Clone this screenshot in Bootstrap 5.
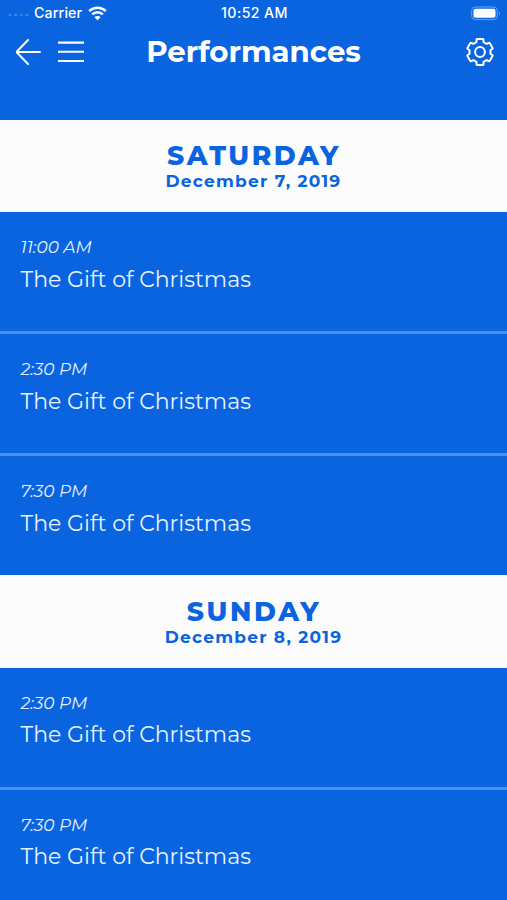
<!DOCTYPE html>
<html lang="en">
<head>
<meta charset="utf-8">
<meta name="viewport" content="width=device-width, initial-scale=1">
<title>Performances</title>
<link href="https://cdn.jsdelivr.net/npm/bootstrap@5.3.0/dist/css/bootstrap.min.css" rel="stylesheet">
<style>
  body { background: #0a64df; color: #fff; font-family: Montserrat, Inter, sans-serif; overflow: hidden; }
  .app-head { height: 119.5px; }
  .status-bar { height: 26px; font: 500 14.2px/26px Inter, sans-serif; }
  .status-bar .side { flex: 1 1 0; }
  .carrier { letter-spacing: .15px; margin: 0 6px 0 5px; }
  .clock { letter-spacing: .4px; padding-right: 2px; }
  .title-bar { height: 52px; }
  .title-bar .side { flex: 1 1 0; }
  .page-title { font-size: 29.2px; font-weight: 700; line-height: 52px; padding-left: 8px; }
  .day-head { height: 92.5px; background: #fcfcfc; color: #0a64df; padding-top: 21.5px; }
  .day-name { font-size: 26.5px; font-weight: 800; line-height: 30px; letter-spacing: 2.6px; margin-right: -1px; }
  .day-date { font-size: 17px; font-weight: 700; line-height: 20px; letter-spacing: 1.25px; margin-right: 0; }
  .show-list { --bs-list-group-bg: transparent; --bs-list-group-color: #fff; }
  .show-list .list-group-item { height: 122px; border: 0; border-bottom: 3px solid #4c90ea; padding: 24px 20.5px 0; color: #e6f2ff; }
  .show-list .list-group-item:last-child { height: 119px; border-bottom: 0; }
  .show-time { font-size: 17px; font-style: italic; line-height: 23px; }
  .show-name { font-size: 22px; line-height: 30px; margin-top: 5.5px; }
</style>
</head>
<body>
<header class="app-head">
  <div class="status-bar d-flex align-items-center">
    <div class="side d-flex align-items-center ps-2">
      <svg width="21" height="5" viewBox="0 0 21 5" fill="#3f86ea"><circle cx="2" cy="4" r="1.5"/><circle cx="7.7" cy="4" r="1.5"/><circle cx="13.3" cy="4" r="1.5"/><circle cx="19" cy="4" r="1.5"/></svg>
      <span class="carrier">Carrier</span>
      <svg width="19" height="15" viewBox="0 0 19 15" fill="none" stroke="#fff" stroke-width="2.5"><path d="M1.2 5.2a11.8 11.8 0 0 1 16.6 0M4.2 8.4a7.6 7.6 0 0 1 10.6 0"/><path d="M9.5 14.3 6.4 11.2a4.4 4.4 0 0 1 6.2 0z" fill="#fff" stroke="none"/></svg>
    </div>
    <div class="clock">10:52 AM</div>
    <div class="side d-flex justify-content-end pe-1">
      <svg width="32" height="15" viewBox="0 0 32 15"><rect x=".7" y="1" width="25.6" height="12.6" rx="3.6" fill="none" stroke="#69a4f2"/><rect x="2.5" y="2.8" width="22" height="9" rx="2" fill="#fff"/><path d="M28 5.2q2 2.1 0 4.2z" fill="#69a4f2"/></svg>
    </div>
  </div>
  <div class="title-bar d-flex align-items-center">
    <div class="side d-flex align-items-center">
      <svg class="ms-3" width="26" height="28" viewBox="0 0 26 28" fill="none" stroke="#fff" stroke-width="2" stroke-linecap="round" stroke-linejoin="round"><path d="M12 2 .4 14 12 26M.4 14H24"/></svg>
      <svg class="ms-3" width="26" height="22" viewBox="0 0 26 22" stroke="#fff" stroke-width="2.1"><path d="M0 1.6h26M0 10.8h26M0 20h26"/></svg>
    </div>
    <h1 class="page-title m-0">Performances</h1>
    <div class="side d-flex justify-content-end pe-2">
      <svg class="me-1" width="30" height="30" viewBox="0 0 30 30" fill="none" stroke="#fff" stroke-width="2" stroke-linejoin="round"><path d="M12 2.100H18Q18.500 2.200 18.500 3V5.100L21.700 6.900 23.700 5.800Q24.400 5.500 24.800 6.200L27.600 11Q27.900 11.600 27.300 12L25.500 13.200V16.800L27.300 18Q27.900 18.400 27.600 19L24.800 23.800Q24.400 24.500 23.700 24.200L21.700 23.100 18.500 24.900V27Q18.500 27.800 18 27.900H12Q11.500 27.800 11.500 27V24.900L8.300 23.100 6.300 24.200Q5.600 24.500 5.200 23.800L2.400 19Q2.100 18.400 2.700 18L4.500 16.800V13.200L2.700 12Q2.100 11.600 2.400 11L5.200 6.200Q5.600 5.500 6.300 5.800L8.300 6.900 11.500 5.100V3Q11.500 2.200 12 2.100Z"/><circle cx="15" cy="15" r="4.900"/></svg>
    </div>
  </div>
</header>
<main>
  <section>
    <div class="day-head text-center">
      <h2 class="day-name mb-0">SATURDAY</h2>
      <div class="day-date">December 7, 2019</div>
    </div>
    <ul class="show-list list-group list-group-flush">
      <li class="list-group-item"><div class="show-time">11:00 AM</div><div class="show-name">The Gift of Christmas</div></li>
      <li class="list-group-item"><div class="show-time">2:30 PM</div><div class="show-name">The Gift of Christmas</div></li>
      <li class="list-group-item"><div class="show-time">7:30 PM</div><div class="show-name">The Gift of Christmas</div></li>
    </ul>
  </section>
  <section>
    <div class="day-head text-center">
      <h2 class="day-name mb-0">SUNDAY</h2>
      <div class="day-date">December 8, 2019</div>
    </div>
    <ul class="show-list list-group list-group-flush">
      <li class="list-group-item"><div class="show-time">2:30 PM</div><div class="show-name">The Gift of Christmas</div></li>
      <li class="list-group-item"><div class="show-time">7:30 PM</div><div class="show-name">The Gift of Christmas</div></li>
    </ul>
  </section>
</main>
<script src="https://cdn.jsdelivr.net/npm/bootstrap@5.3.0/dist/js/bootstrap.bundle.min.js"></script>
</body>
</html>
